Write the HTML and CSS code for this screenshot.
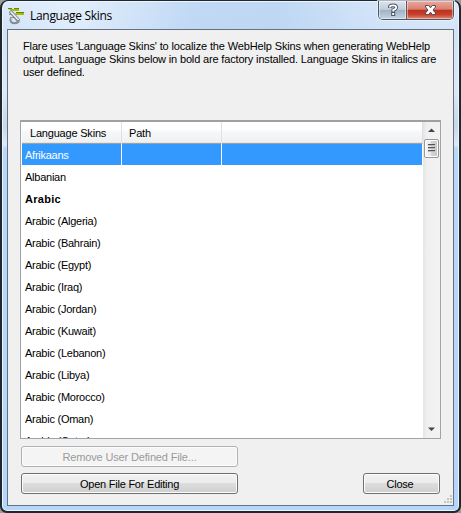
FILE: index.html
```html
<!DOCTYPE html>
<html lang="en">
<head>
<meta charset="utf-8">
<title>Language Skins</title>
<link rel="stylesheet" href="styles.css">
</head>
<body>
<div class="window">
  <header class="titlebar">
    <svg class="app-icon" width="18" height="18" viewBox="0 0 18 18">
      <path d="M0 2h11v2H5zM7 6h9v2H8z" fill="#a9bd00"/>
      <path d="M0 1.500h4M6 1.500h5M8 5.500h8" stroke="#68800b"/>
      <path d="M1 7.500h4M2 10.500h4" stroke="#8b929a"/>
      <path d="M2 4l9 10" stroke="#777e84" stroke-width="3.500"/>
      <path d="M2.500 4.500l8.500 9" stroke="#edf1f5" stroke-width="1.800"/>
      <path d="M3 11.500c-1 3 1 4.500 3.500 4.500s4.500-1 4-3" stroke="#858c94" stroke-width="2.500" fill="none"/>
      <path d="M3.500 12.500c0 2 2 2.500 4 2" stroke="#e7eaee" fill="none"/>
    </svg>
    <h1 class="title"><span class="txt">Language Skins</span></h1>
    <div class="controls">
      <button class="ctl help" aria-label="Help"><svg width="12" height="14" viewBox="0 0 12 14"><path d="M2.800 5V4.200Q2.800 2.400 6 2.400T9.200 4.500Q9.200 6 6.200 7.100V9" fill="none" stroke="#4d5563" stroke-width="3.600"/><path d="M4.200 9h4v4h-4z" fill="#4d5563"/><path d="M2.800 4.600V4.200Q2.800 2.400 6 2.400T9.200 4.500Q9.200 6 6.200 7.100V8.400" fill="none" stroke="#fff" stroke-width="1.800"/><path d="M5.200 10h2v2h-2z" fill="#fff"/></svg></button>
      <button class="ctl close" aria-label="Close window"><svg width="13" height="12" viewBox="0 0 13 12"><path d="M1.500 1.500h3.200l1.800 2.300 1.800-2.300h3.200v1.500L9 6l2.500 3v1.500H8.300L6.500 8.200l-1.800 2.300H1.500V9L4 6 1.500 3z" fill="#fff" stroke="#514b57"/></svg></button>
    </div>
  </header>
  <main class="client">
    <p class="intro"><span class="txt l1">Flare uses 'Language Skins' to localize the WebHelp Skins when generating WebHelp</span><br><span class="txt l2">output. Language Skins below in bold are factory installed. Language Skins in italics are</span><br><span class="txt l3">user defined.</span></p>
    <div class="list">
      <div class="table">
        <div class="row head"><div class="cell"><span class="txt">Language Skins</span></div><div class="cell"><span class="txt">Path</span></div><div class="cell"></div></div>
        <div class="row selected"><div class="cell">Afrikaans</div><div class="cell"></div><div class="cell"></div></div>
        <div class="row">Albanian</div>
        <div class="row bold">Arabic</div>
        <div class="row">Arabic (Algeria)</div>
        <div class="row">Arabic (Bahrain)</div>
        <div class="row">Arabic (Egypt)</div>
        <div class="row">Arabic (Iraq)</div>
        <div class="row">Arabic (Jordan)</div>
        <div class="row">Arabic (Kuwait)</div>
        <div class="row">Arabic (Lebanon)</div>
        <div class="row">Arabic (Libya)</div>
        <div class="row">Arabic (Morocco)</div>
        <div class="row">Arabic (Oman)</div>
        <div class="row">Arabic (Qatar)</div>
      </div>
      <div class="scrollbar">
        <svg class="arrow" width="15" height="17" viewBox="0 0 15 17"><path d="M4 10L7.500 6.500 11 10z" fill="#444"/></svg>
        <div class="thumb"><svg width="7" height="9" viewBox="0 0 7 9"><path d="M0 .5h7M0 3.500h7M0 6.500h7" stroke="#555"/><path d="M0 1.500h7M0 4.500h7M0 7.500h7" stroke="#bbb"/></svg></div>
        <svg class="arrow down" width="15" height="17" viewBox="0 0 15 17"><path d="M4 6.500h7L7.500 10z" fill="#444"/></svg>
      </div>
    </div>
    <div class="actions">
      <button class="btn disabled" disabled><span class="txt">Remove User Defined File...</span></button>
      <div class="action-row">
        <button class="btn"><span class="txt">Open File For Editing</span></button>
        <button class="btn small"><span class="txt">Close</span></button>
      </div>
    </div>
    <svg class="grip" width="10" height="10" viewBox="0 0 10 10"><path d="M7 0h2v2H7zM4 3h2v2H4zM7 3h2v2H7zM1 6h2v2H1zM4 6h2v2H4zM7 6h2v2H7z" fill="#c3c3c3"/></svg>
  </main>
</div>
</body>
</html>
```
FILE: styles.css
```css
* { box-sizing: border-box; }
html, body { margin: 0; height: 100%; overflow: hidden; }
body { background: #9b9b9b; font: 11px/13px "Liberation Sans", Arial, sans-serif; color: #000; }
button { font: inherit; color: inherit; margin: 0; padding: 0; }
.txt { white-space: nowrap; }
.window {
  width: 461px; height: 513px; padding: 0 5px 5px; display: flex; flex-direction: column;
  border: 2px solid #22262d; border-top-width: 1px; border-radius: 8px 8px 7px 7px;
  background: linear-gradient(#dceafb 0, #d2e3f7 30px, #dbe8f7 90px, #c7d8ea 125px, #dde9f7 144px, #b8d8fa 147px, #b5d6fa 100%);
  box-shadow: inset 0 0 0 1px #e9f5ff;
}
.titlebar { height: 28px; display: flex; align-items: flex-start; flex: none; background: linear-gradient(90deg, #e9f3fe00, #e9f3fe90 15%, #b9d4f3c0 42%, #b6d2f1c0 60%, #d0e3f880 85%, #d8e8fa80); margin: 1px 0 -1px; }
.app-icon { margin: 5px 0 0 1px; }
.title { font: 12px/16px "Open Sans", "Noto Sans", sans-serif; margin: 6px 0 0 4px; letter-spacing: -.3px; }
.controls { display: flex; margin: -1px 0 0 auto; height: 19px; border: 1px solid #4b5563; border-top: 0; border-radius: 0 0 5px 5px; overflow: hidden; box-shadow: 0 0 0 1px #eef6ffb0; }
.ctl { display: flex; align-items: center; justify-content: center; border: 0; box-shadow: inset 0 0 0 1px #ffffff70; }
.help { width: 28px; border-right: 1px solid #66545e; background: linear-gradient(#dce5ed, #bfccd8 48%, #9fb0c2 50%, #c2d4e5); }
.close { width: 46px; background: linear-gradient(#eaa79a, #d98172 46%, #bd3121 50%, #c7402a 75%, #e18a70); }
.client { flex: 1; min-height: 0; border: 1px solid #65717e; background: #f0f0f0; padding: 10px 13px 0 12px; position: relative; }
.intro { margin: 0 0 0 3px; height: 80px; letter-spacing: -.14px; }
.l2 { letter-spacing: -.16px; }
.list { width: 421px; height: 319px; border: 1px solid #a0a3aa; border-top: 2px solid #a0a0a0; background: #fff; display: flex; overflow: hidden; }
.table { width: 402px; flex: none; padding-left: 1px; }
.row { height: 22px; line-height: 22px; padding-left: 3px; white-space: nowrap; letter-spacing: -.25px; }
.head { display: grid; grid-template-columns: 100px 100px 1fr; padding: 0; line-height: 23px; background: linear-gradient(#fff 0 8px, #f7f8fa 9px, #f1f2f4 18px); border-bottom: 1px solid #a0a0a0; box-shadow: inset 0 -1px #e4e5e8; letter-spacing: -.2px; }
.head .cell { border-right: 1px solid #dfe0e2; padding-left: 8px; }
.head .cell + .cell { padding-left: 7px; }
.selected { display: grid; grid-template-columns: 100px 100px 1fr; padding: 0 0 1px; height: 22px; color: #fff; }
.selected .cell { background: #3399ff; border-right: 1px solid #fff; padding-left: 3px; height: 21px; }
.bold { font-weight: bold; letter-spacing: .3px; }
.scrollbar { width: 17px; display: flex; flex-direction: column; align-items: center; background: linear-gradient(90deg, #e5e5e5, #f0f0f0 4px, #f2f2f2); }
.arrow { flex: none; }
.down { margin-top: auto; }
.thumb { width: 15px; height: 19px; border: 1px solid #979797; border-radius: 2px; display: flex; align-items: center; justify-content: center; background: linear-gradient(90deg, #f6f6f6, #e9e9e9 48%, #d5d5d5 50%, #c6c6c6); box-shadow: inset 0 0 0 1px #fff; }
.actions { padding: 7px 0 0 1px; display: flex; flex-direction: column; gap: 6px; }
.action-row { display: flex; justify-content: space-between; }
.btn { width: 217px; height: 21px; border: 1px solid #707070; border-radius: 3px; background: linear-gradient(#f3f3f3, #ebebeb 49%, #dddddd 50%, #cfcfcf); box-shadow: inset 0 0 0 1px #fcfcfc; line-height: 21px; letter-spacing: -.23px; }
.disabled { color: #9a9a9a; border-color: #adb2b5; background: #f4f4f4; letter-spacing: -.15px; }
.small { width: 77px; padding-right: 3px; }
.grip { position: absolute; right: 0; bottom: 0; }
```
